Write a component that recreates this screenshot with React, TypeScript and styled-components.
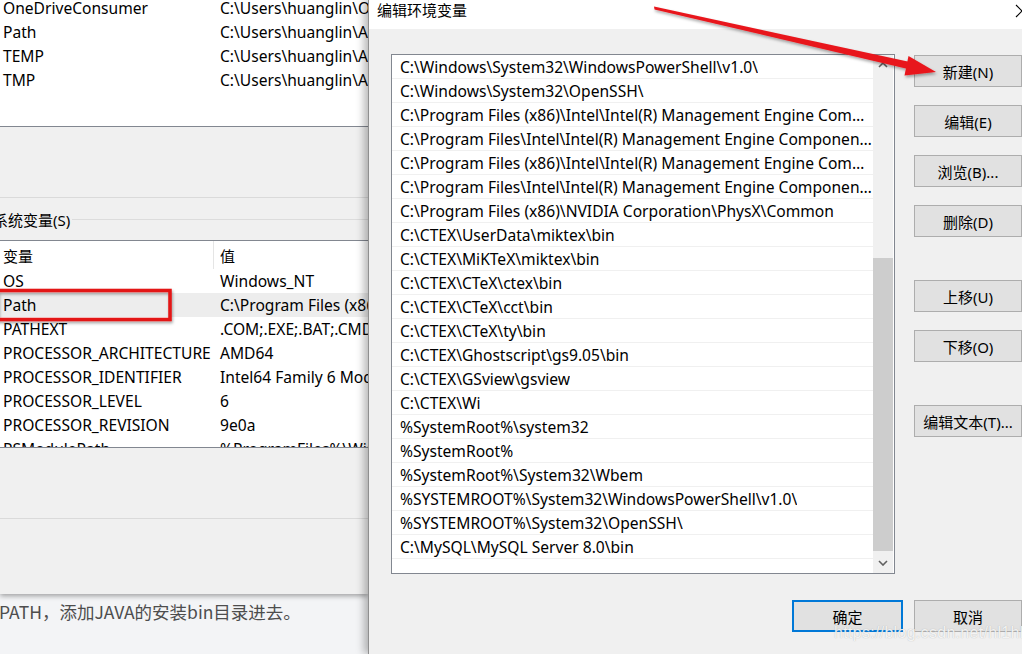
import React from 'react';
import styled, { createGlobalStyle } from 'styled-components';

const GlobalStyle = createGlobalStyle`
  html, body {
    margin: 0;
    padding: 0;
    width: 1022px;
    height: 654px;
    overflow: hidden;
    background: #f3f4f6;
  }
  body {
    font-family: "Noto Sans", "Noto Sans CJK SC", sans-serif;
    font-size: 15px;
    color: #000;
  }
  * {
    box-sizing: border-box;
  }
`;

const UI_FONT = `"Noto Sans", "Noto Sans CJK SC", sans-serif`;

const Page = styled.div`
  position: relative;
  width: 1022px;
  height: 654px;
  overflow: hidden;
`;

const Desktop = styled.div`
  display: flex;
  height: 100%;
`;

/* ---------- background window (环境变量) ---------- */

const LeftColumn = styled.div`
  width: 368px;
  flex-shrink: 0;
  display: flex;
  flex-direction: column;
`;

const EnvWindow = styled.div`
  height: 594px;
  background: #f0f0f0;
  display: flex;
  flex-direction: column;
  box-shadow: 0 2px 5px rgba(0, 0, 0, 0.35);
  overflow: hidden;
  position: relative;
  z-index: 1;
`;

const ListPane = styled.div<{ $height: number; $topBorder?: boolean }>`
  height: ${(p) => p.$height}px;
  flex-shrink: 0;
  background: #fff;
  border-bottom: 1px solid #828790;
  border-top: ${(p) => (p.$topBorder ? '1px solid #828790' : 'none')};
  overflow: hidden;
`;

const Rows = styled.div<{ $shift?: number }>`
  margin-top: ${(p) => p.$shift ?? 0}px;
`;

const VarRow = styled.div<{ $selected?: boolean }>`
  display: grid;
  grid-template-columns: 214px 1fr;
  height: 24px;
  align-items: center;
  white-space: nowrap;
  background: ${(p) => (p.$selected ? '#ededed' : 'transparent')};
  font-family: ${UI_FONT};
  font-size: 15.6px;
`;

const VarCell = styled.div<{ $value?: boolean }>`
  padding-left: ${(p) => (p.$value ? 6 : 3)}px;
  overflow: hidden;
`;

const HeaderRow = styled.div`
  display: grid;
  grid-template-columns: 214px 1fr;
  height: 28px;
  align-items: center;
  white-space: nowrap;
  font-size: 15px;
`;

const HeaderCell = styled.div<{ $divider?: boolean }>`
  height: 100%;
  display: flex;
  align-items: center;
  padding: 1px 0 0 ${(p) => (p.$divider ? 3 : 6)}px;
  border-right: ${(p) => (p.$divider ? '1px solid #e5e5e5' : 'none')};
`;

const GapArea = styled.div<{ $height: number; $line?: boolean }>`
  height: ${(p) => p.$height}px;
  flex-shrink: 0;
  border-bottom: ${(p) => (p.$line ? '1px solid #dadada' : 'none')};
`;

const GroupLabel = styled.div`
  display: flex;
  align-items: center;
  gap: 2px;
  height: 20px;
  margin: 11px 0 11px -7px;
  white-space: nowrap;
  font-size: 15px;

  &::after {
    content: '';
    flex: 1;
    height: 1px;
    background: #dcdcdc;
  }
`;

const ArticleText = styled.div`
  padding: 5px 0 0 0;
  margin-left: -1px;
  font-family: "Noto Sans CJK SC", "Noto Sans", sans-serif;
  font-size: 17.5px;
  color: #4d4d4d;
  white-space: nowrap;
`;

/* ---------- edit dialog (编辑环境变量) ---------- */

const Dialog = styled.div`
  flex: 1;
  display: flex;
  flex-direction: column;
  background: #f0f0f0;
  border-left: 1px solid #8f8f8f;
  box-shadow: -4px 0 8px rgba(0, 0, 0, 0.28);
  position: relative;
  z-index: 2;
  overflow: hidden;
`;

const TitleBar = styled.div`
  height: 29px;
  flex-shrink: 0;
  background: #fff;
  display: flex;
  justify-content: space-between;
  align-items: flex-start;
  padding: 0 0 0 8px;
`;

const Title = styled.div`
  font-size: 15px;
  line-height: 20px;
`;

const CloseGlyph = styled.svg`
  width: 14px;
  height: 14px;
  margin: 4px -7px 0 0;
`;

const DialogBody = styled.div`
  flex: 1;
  display: flex;
  flex-direction: column;
  padding: 25px 0 0 22px;
`;

const MainRow = styled.div`
  display: flex;
  gap: 19px;
`;

const PathList = styled.div`
  width: 504px;
  height: 520px;
  flex-shrink: 0;
  background: #fff;
  border: 1px solid #828790;
  display: flex;
`;

const PathRows = styled.div`
  width: 481px;
  display: flex;
  flex-direction: column;
  overflow: hidden;
`;

const PathRow = styled.div`
  height: 24px;
  flex-shrink: 0;
  display: flex;
  align-items: center;
  padding: 1px 0 0 8px;
  border-bottom: 1px solid #f0f0f0;
  white-space: nowrap;
  overflow: hidden;
  font-size: 15.6px;
`;

const PathText = styled.span`
  overflow: hidden;
  text-overflow: ellipsis;
`;

const ScrollBar = styled.div`
  width: 20px;
  margin-right: 1px;
  background: #f0f0f0;
  display: flex;
  flex-direction: column;
`;

const ScrollArrow = styled.div`
  height: 20px;
  flex-shrink: 0;
  display: flex;
  align-items: center;
  justify-content: center;
`;

const ScrollTrack = styled.div`
  flex: 1;
  display: flex;
  flex-direction: column;
  justify-content: flex-end;
  padding-bottom: 2px;
`;

const ScrollThumb = styled.div<{ $height: number }>`
  height: ${(p) => p.$height}px;
  background: #cdcdcd;
`;

const ButtonColumn = styled.div`
  display: flex;
  flex-direction: column;
  gap: 18px;
  padding-top: 1px;
`;

const WinButton = styled.button<{ $spaced?: boolean; $primary?: boolean; $width?: number }>`
  width: ${(p) => p.$width ?? 108}px;
  height: 32px;
  margin-top: ${(p) => (p.$spaced ? '25px' : '0')};
  background: #e1e1e1;
  border: ${(p) => (p.$primary ? '2px solid #0078d7' : '1px solid #adadad')};
  font-family: ${UI_FONT};
  font-size: 15px;
  color: #000;
  padding: 0;
  display: flex;
  align-items: center;
  justify-content: center;
  flex-shrink: 0;
`;

const FooterRow = styled.div`
  display: flex;
  gap: 11px;
  margin-top: 26px;
  padding-left: 401px;
`;

/* ---------- annotations over the screenshot ---------- */

const Overlay = styled.svg`
  position: absolute;
  left: 0;
  top: 0;
  width: 1022px;
  height: 654px;
  pointer-events: none;
  z-index: 5;
`;

const Watermark = styled.div`
  position: absolute;
  left: 834px;
  top: 624px;
  z-index: 6;
  font-family: "Liberation Sans", Arial, sans-serif;
  font-size: 16px;
  letter-spacing: 0.3px;
  color: rgba(255, 255, 255, 0.85);
  text-shadow: 0 0 1px rgba(120, 120, 120, 0.55);
  white-space: nowrap;
`;

const userVars = [
  ['OneDriveConsumer', 'C:\\Users\\huanglin\\OneDrive'],
  ['Path', 'C:\\Users\\huanglin\\AppData\\Local\\Microsoft\\WindowsApps'],
  ['TEMP', 'C:\\Users\\huanglin\\AppData\\Local\\Temp'],
  ['TMP', 'C:\\Users\\huanglin\\AppData\\Local\\Temp'],
];

const systemVars = [
  ['OS', 'Windows_NT'],
  ['Path', 'C:\\Program Files (x86)\\Intel\\Intel(R) Management'],
  ['PATHEXT', '.COM;.EXE;.BAT;.CMD;.VBS;.VBE;.JS'],
  ['PROCESSOR_ARCHITECTURE', 'AMD64'],
  ['PROCESSOR_IDENTIFIER', 'Intel64 Family 6 Model 158'],
  ['PROCESSOR_LEVEL', '6'],
  ['PROCESSOR_REVISION', '9e0a'],
  ['PSModulePath', '%ProgramFiles%\\WindowsPowerShell\\Modules'],
];

const paths = [
  'C:\\Windows\\System32\\WindowsPowerShell\\v1.0\\',
  'C:\\Windows\\System32\\OpenSSH\\',
  'C:\\Program Files (x86)\\Intel\\Intel(R) Management Engine Components\\DAL',
  'C:\\Program Files\\Intel\\Intel(R) Management Engine Components\\DAL',
  'C:\\Program Files (x86)\\Intel\\Intel(R) Management Engine Components\\IPT',
  'C:\\Program Files\\Intel\\Intel(R) Management Engine Components\\IPT',
  'C:\\Program Files (x86)\\NVIDIA Corporation\\PhysX\\Common',
  'C:\\CTEX\\UserData\\miktex\\bin',
  'C:\\CTEX\\MiKTeX\\miktex\\bin',
  'C:\\CTEX\\CTeX\\ctex\\bin',
  'C:\\CTEX\\CTeX\\cct\\bin',
  'C:\\CTEX\\CTeX\\ty\\bin',
  'C:\\CTEX\\Ghostscript\\gs9.05\\bin',
  'C:\\CTEX\\GSview\\gsview',
  'C:\\CTEX\\Wi',
  '%SystemRoot%\\system32',
  '%SystemRoot%',
  '%SystemRoot%\\System32\\Wbem',
  '%SYSTEMROOT%\\System32\\WindowsPowerShell\\v1.0\\',
  '%SYSTEMROOT%\\System32\\OpenSSH\\',
  'C:\\MySQL\\MySQL Server 8.0\\bin',
];

const Chevron: React.FC<{ down?: boolean }> = ({ down }) => (
  <svg width="10" height="6" viewBox="0 0 10 6">
    <path
      d={down ? 'M1 1 L5 5 L9 1' : 'M1 5 L5 1 L9 5'}
      fill="none"
      stroke="#606060"
      strokeWidth="1.6"
    />
  </svg>
);

const App: React.FC = () => {
  return (
    <Page>
      <GlobalStyle />
      <Desktop>
        <LeftColumn>
          <EnvWindow>
            <ListPane $height={127}>
              <Rows $shift={-4}>
                {userVars.map(([name, value]) => (
                  <VarRow key={name}>
                    <VarCell>{name}</VarCell>
                    <VarCell $value>{value}</VarCell>
                  </VarRow>
                ))}
              </Rows>
            </ListPane>
            <GapArea $height={71} $line />
            <GroupLabel>系统变量(S)</GroupLabel>
            <ListPane $height={208} $topBorder>
              <HeaderRow>
                <HeaderCell $divider>变量</HeaderCell>
                <HeaderCell>值</HeaderCell>
              </HeaderRow>
              {systemVars.map(([name, value]) => (
                <VarRow key={name} $selected={name === 'Path'}>
                  <VarCell>{name}</VarCell>
                  <VarCell $value>{value}</VarCell>
                </VarRow>
              ))}
            </ListPane>
            <GapArea $height={71} $line />
          </EnvWindow>
          <ArticleText>PATH，添加JAVA的安装bin目录进去。</ArticleText>
        </LeftColumn>

        <Dialog>
          <TitleBar>
            <Title>编辑环境变量</Title>
            <CloseGlyph viewBox="0 0 14 14">
              <path d="M1 1 L13 13 M13 1 L1 13" stroke="#000" strokeWidth="1.1" />
            </CloseGlyph>
          </TitleBar>
          <DialogBody>
            <MainRow>
              <PathList>
                <PathRows>
                  {paths.map((p) => (
                    <PathRow key={p}>
                      <PathText>{p}</PathText>
                    </PathRow>
                  ))}
                </PathRows>
                <ScrollBar>
                  <ScrollArrow>
                    <Chevron />
                  </ScrollArrow>
                  <ScrollTrack>
                    <ScrollThumb $height={293} />
                  </ScrollTrack>
                  <ScrollArrow>
                    <Chevron down />
                  </ScrollArrow>
                </ScrollBar>
              </PathList>
              <ButtonColumn>
                <WinButton>新建(N)</WinButton>
                <WinButton>编辑(E)</WinButton>
                <WinButton>浏览(B)...</WinButton>
                <WinButton>删除(D)</WinButton>
                <WinButton $spaced>上移(U)</WinButton>
                <WinButton>下移(O)</WinButton>
                <WinButton $spaced>编辑文本(T)...</WinButton>
              </ButtonColumn>
            </MainRow>
            <FooterRow>
              <WinButton $primary $width={111}>确定</WinButton>
              <WinButton>取消</WinButton>
            </FooterRow>
          </DialogBody>
        </Dialog>
      </Desktop>

      <Overlay viewBox="0 0 1022 654">
        <defs>
          <filter id="annShadow" x="-10%" y="-10%" width="120%" height="140%">
            <feDropShadow dx="1" dy="2" stdDeviation="1.5" floodColor="#000" floodOpacity="0.35" />
          </filter>
        </defs>
        <rect
          x="-3"
          y="290.5"
          width="173"
          height="29"
          fill="none"
          stroke="#e31313"
          strokeWidth="3.5"
          filter="url(#annShadow)"
        />
        <g filter="url(#annShadow)" fill="#e8161c">
          <polygon points="654,6.5 654.5,9.5 908,69 910,62" />
          <polygon points="936,72 904.5,75.5 908.5,56" />
        </g>
      </Overlay>
      <Watermark>https://blog.csdn.net/hl1hl</Watermark>
    </Page>
  );
};

export default App;
